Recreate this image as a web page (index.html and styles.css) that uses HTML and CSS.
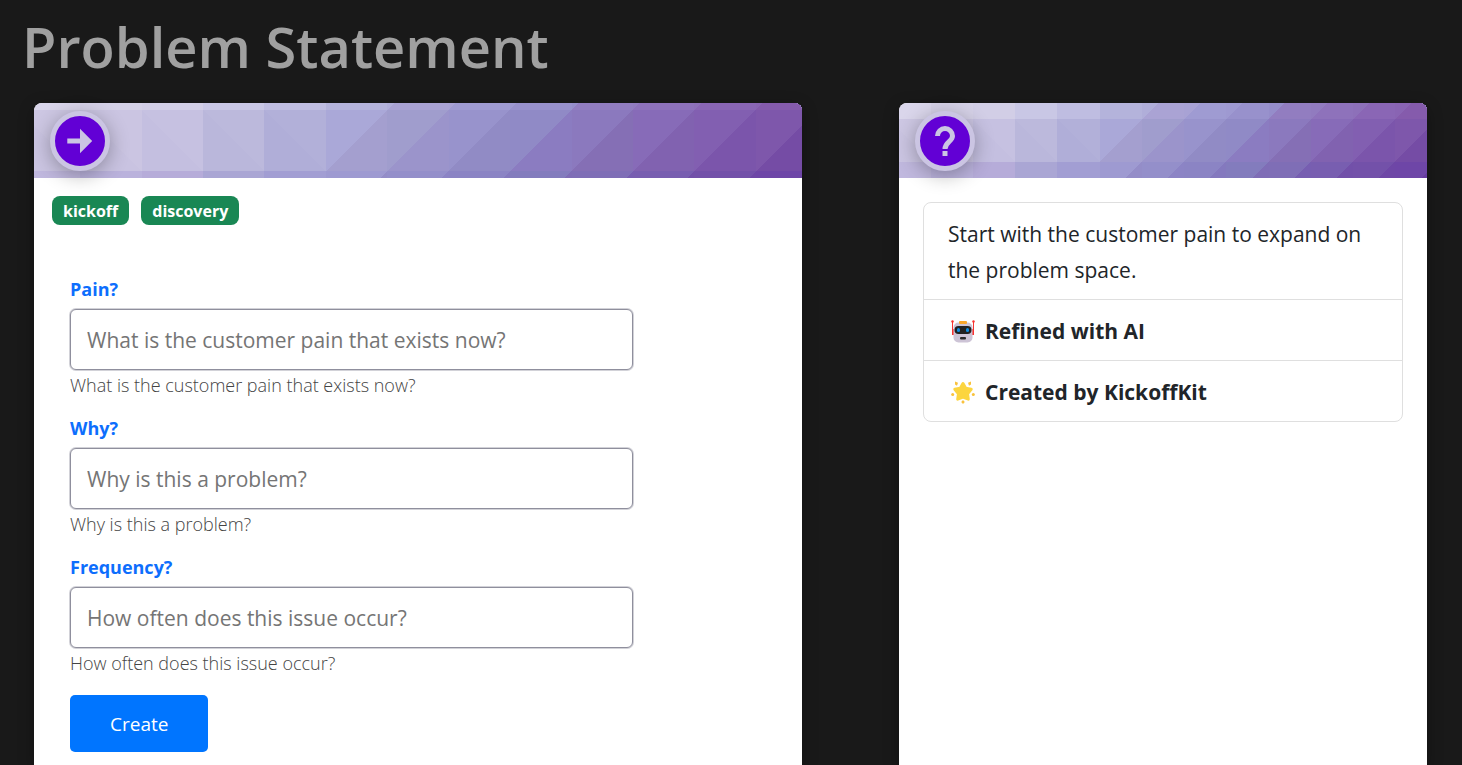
FILE: index.html
```html
<!DOCTYPE html>
<html lang="en">
<head>
  <meta charset="UTF-8">
  <title>Problem Statement</title>
  <meta name="viewport" content="width=device-width, initial-scale=1.0">
  <link rel="stylesheet" href="styles.css">
</head>
<body>
  <!-- Shared banner pattern, crisp edges so no seams show between tiles -->
  <svg class="defs" aria-hidden="true">
    <symbol id="banner" viewBox="0 0 1250 300" preserveAspectRatio="xMidYMid slice" shape-rendering="crispEdges">
      <!-- top row -->
      <path fill="#dad6eb" d="M0 0h1250v102H0z"/>
      <path fill="#d5d1e7" d="M75 0h1175v102H75z"/>
      <path fill="#d2cee6" d="M175 0h1075v102H175z"/>
      <path fill="#c9c7e5" d="M275 0h975v102H275z"/>
      <path fill="#bfbde1" d="M375 0h875v102H375z"/>
      <path fill="#b4b3db" d="M475 0h775v102H475z"/>
      <path fill="#b0aed9" d="M575 0h675v102H575z"/>
      <path fill="#aaa3d4" d="M575 100L675 0v102H575z"/>
      <path fill="#a8a2d4" d="M675 0h575v102H675z"/>
      <path fill="#9f9bd2" d="M675 100L775 0v102H675z"/>
      <path fill="#9e99d1" d="M775 0h475v102H775z"/>
      <path fill="#9891cc" d="M775 100L875 0v102H775z"/>
      <path fill="#958dca" d="M875 0h375v102H875z"/>
      <path fill="#927dc0" d="M875 100L975 0v102H875z"/>
      <path fill="#917bbf" d="M975 0h275v102H975z"/>
      <path fill="#8e72bb" d="M975 100l100-100v102H975z"/>
      <path fill="#8d70b9" d="M1075 0h175v102h-175z"/>
      <path fill="#8a66b5" d="M1075 100l100-100v102h-100z"/>
      <path fill="#8964b3" d="M1175 0h75v102h-75z"/>
      <path fill="#855bac" d="M1175 100l75-75v77h-75z"/>
      <!-- middle row -->
      <path fill="#cdc7e3" d="M0 100h1250v102H0z"/>
      <path fill="#cbc5e2" d="M0 125l75 75v2H0z"/>
      <path fill="#cbc5e2" d="M75 100h1175v102H75z"/>
      <path fill="#c9c3e1" d="M75 100l100 100v2H75z"/>
      <path fill="#c6c1e1" d="M175 100h1075v102H175z"/>
      <path fill="#c4bfe0" d="M175 100l100 100v2H175z"/>
      <path fill="#bcb9dc" d="M275 100h975v102H275z"/>
      <path fill="#bab7db" d="M275 100l100 100v2H275z"/>
      <path fill="#b2b0d9" d="M375 100h875v102H375z"/>
      <path fill="#b0aed8" d="M375 100l100 100v2H375z"/>
      <path fill="#aaa8d8" d="M475 100h775v102H475z"/>
      <path fill="#a49fcf" d="M475 200l100-100v102H475z"/>
      <path fill="#a09dcd" d="M575 100h675v102H575z"/>
      <path fill="#9b94cb" d="M575 200l100-100v102H575z"/>
      <path fill="#9893cc" d="M675 100h575v102H675z"/>
      <path fill="#918bc5" d="M675 200l100-100v102H675z"/>
      <path fill="#908ac6" d="M775 100h475v102H775z"/>
      <path fill="#8b7cc1" d="M775 200l100-100v102H775z"/>
      <path fill="#8b79be" d="M875 100h375v102H875z"/>
      <path fill="#856fb5" d="M875 200l100-100v102H875z"/>
      <path fill="#876bb8" d="M975 100h275v102H975z"/>
      <path fill="#8162b0" d="M975 200l100-100v102H975z"/>
      <path fill="#825fb1" d="M1075 100h175v102h-175z"/>
      <path fill="#7b55ab" d="M1075 200l100-100v102h-100z"/>
      <path fill="#7e57ab" d="M1175 100h75v102h-75z"/>
      <path fill="#754ca5" d="M1175 200l75-75v77h-75z"/>
      <!-- bottom row -->
      <path fill="#c0b8de" d="M0 200h1250v100H0z"/>
      <path fill="#bab2dc" d="M75 200h1175v100H75z"/>
      <path fill="#b6acd9" d="M175 200h1075v100H175z"/>
      <path fill="#aaa6d4" d="M275 200h975v100H275z"/>
      <path fill="#a29ed3" d="M375 200h875v100H375z"/>
      <path fill="#9e9ad1" d="M475 200h775v100H475z"/>
      <path fill="#948dc8" d="M475 300l100-100v100z"/>
      <path fill="#948fca" d="M575 200h675v100H575z"/>
      <path fill="#8c84c5" d="M575 300l100-100v100z"/>
      <path fill="#8b84c4" d="M675 200h575v100H675z"/>
      <path fill="#8479be" d="M675 300l100-100v100z"/>
      <path fill="#837cbd" d="M775 200h475v100H775z"/>
      <path fill="#7f6db6" d="M775 300l100-100v100z"/>
      <path fill="#7f6eb6" d="M875 200h375v100H875z"/>
      <path fill="#775eb1" d="M875 300l100-100v100z"/>
      <path fill="#785eb0" d="M975 200h275v100H975z"/>
      <path fill="#7250a9" d="M975 300l100-100v100z"/>
      <path fill="#7351a9" d="M1075 200h175v100h-175z"/>
      <path fill="#6e47a6" d="M1075 300l100-100v100z"/>
      <path fill="#6e46a7" d="M1175 200h75v100h-75z"/>
      <path fill="#673da0" d="M1175 300l75-75v75z"/>
    </symbol>
  </svg>

  <h1 class="page-title">Problem Statement</h1>

  <main class="board">
    <section class="card">
      <div class="card-header">
        <svg class="banner" aria-hidden="true"><use href="#banner"/></svg>
        <span class="card-icon">
          <svg width="50" height="50" viewBox="0 0 50 50" aria-hidden="true">
            <path fill="currentColor" d="M12.300 22.400H25v-9.600L37.200 25 25 37.200v-9.600H12.300z"/>
          </svg>
        </span>
      </div>
      <div class="tags">
        <span class="tag">kickoff</span>
        <span class="tag">discovery</span>
      </div>
      <form class="statement-form">
        <div class="field">
          <label for="pain">Pain?</label>
          <input type="text" id="pain" placeholder="What is the customer pain that exists now?" aria-describedby="pain-help">
          <small id="pain-help">What is the customer pain that exists now?</small>
        </div>
        <div class="field">
          <label for="why">Why?</label>
          <input type="text" id="why" placeholder="Why is this a problem?" aria-describedby="why-help">
          <small id="why-help">Why is this a problem?</small>
        </div>
        <div class="field">
          <label for="frequency">Frequency?</label>
          <input type="text" id="frequency" placeholder="How often does this issue occur?" aria-describedby="frequency-help">
          <small id="frequency-help">How often does this issue occur?</small>
        </div>
        <button type="submit" class="btn">Create</button>
      </form>
    </section>

    <aside class="card">
      <div class="card-header">
        <svg class="banner" aria-hidden="true"><use href="#banner"/></svg>
        <span class="card-icon">
          <svg width="50" height="50" viewBox="0 0 50 50" aria-hidden="true">
            <path fill="none" stroke="currentColor" stroke-width="5" d="M17.500 20a7.500 7.500 0 0 1 15 0c0 5.500-7.500 6-7.500 13"/>
            <path fill="currentColor" d="M22.500 35h5v5h-5z"/>
          </svg>
        </span>
      </div>
      <ul class="info-list">
        <li>Start with the customer pain to expand on the problem space.</li>
        <li class="info-strong">
          <svg class="emoji" viewBox="0 0 24 24" aria-hidden="true">
            <path fill="#f8312f" d="M1 2h1v8h1v6H1zM22 2h1v14h-2v-6h1z"/>
            <circle fill="#f8312f" cx="1.500" cy="2.500" r="1.200"/>
            <circle fill="#f8312f" cx="22.500" cy="2.500" r="1.200"/>
            <rect fill="#cdc4d6" x="2.500" y="3.500" width="19" height="20" rx="5"/>
            <rect fill="#f9a62b" x="8" y="2" width="8" height="3" rx="1"/>
            <rect fill="#212121" x="3.500" y="7" width="17" height="8" rx="4"/>
            <rect fill="#0d8ae0" x="6" y="9" width="3" height="4" rx="1.500"/>
            <rect fill="#0d8ae0" x="15" y="9" width="3" height="4" rx="1.500"/>
            <rect fill="#2b2b2b" x="9" y="18" width="6" height="2.500" rx="1"/>
          </svg>
          Refined with AI
        </li>
        <li class="info-strong">
          <svg class="emoji" viewBox="0 0 24 24" aria-hidden="true">
            <path fill="#fcd53f" stroke="#fcd53f" stroke-width="3" stroke-linejoin="round" d="M12 3.500l2.700 4.800 5.500.9-3.700 4.500.8 5.500-5.300-2-5.300 2 .8-5.500-3.700-4.500 5.500-.9z"/>
            <g fill="#f9c23c">
              <path d="M4 1.500l3 1.200-1 3-2-1.200zM20 1.500l-3 1.200 1 3 2-1.200z"/>
              <circle cx="1.700" cy="14.500" r="1.500"/>
              <circle cx="22.300" cy="14.500" r="1.500"/>
              <path d="M12 20l1.800 2-1.800 2-1.800-2z"/>
            </g>
          </svg>
          Created by KickoffKit
        </li>
      </ul>
    </aside>
  </main>
</body>
</html>
```

FILE: styles.css
```css
* { box-sizing: border-box; }
body {
  margin: 0;
  min-height: 100vh;
  display: flex;
  flex-direction: column;
  background: #191919;
  font-family: "Segoe UI", "Open Sans", "Noto Sans", sans-serif;
  font-size: 21px;
  line-height: 36px;
  color: #212529;
}
.defs { position: absolute; width: 0; height: 0; }
.page-title {
  margin: 0;
  padding: 11px 22px 22px;
  font-size: 56px;
  font-weight: 600;
  line-height: 70px;
  color: #a0a0a0;
}
.board {
  flex: 1;
  display: grid;
  grid-template-columns: 16fr 11fr;
  gap: 97px;
  padding: 0 35px 0 34px;
}
.card {
  background: #fff;
  border-radius: 8px 8px 0 0;
  box-shadow: 0 4px 16px rgba(0, 0, 0, .3);
}
.card-header {
  position: relative;
  height: 75px;
  padding: 8px 16px;
}
.banner {
  position: absolute;
  top: 0;
  left: 0;
  width: 100%;
  height: 100%;
  border-radius: 8px 8px 0 0;
}
.card-icon {
  position: relative;
  display: block;
  width: 60px;
  height: 60px;
  border: 5px solid #cbc5e3;
  border-radius: 50%;
  background: #6200d5;
  color: #cbc5e3;
  box-shadow: 0 4px 20px rgba(0, 0, 0, .3);
}
.card-icon svg { display: block; }

/* tags */
.tags {
  display: flex;
  gap: 12px;
  padding: 18px 18px 0;
}
.tag {
  padding: 1px 11px 0;
  border-radius: 8px;
  background: #198754;
  color: #fff;
  font-size: 16px;
  font-weight: 700;
  line-height: 28px;
}

/* form */
.statement-form {
  max-width: 635px;
  padding: 49px 36px 0;
}
.field {
  display: flex;
  flex-direction: column;
  margin-bottom: 13px;
}
.field label {
  margin-bottom: 5px;
  font-size: 18px;
  font-weight: 700;
  line-height: 30px;
  color: #0d6efd;
}
.field input {
  height: 61px;
  padding: 0 16px;
  border: 1px solid #8f8f9d;
  border-radius: 6px;
  box-shadow: 0 0 0 1px #d2d2d8;
  font: inherit;
}
.field input::placeholder { color: #757575; }
.field small {
  font-size: 18px;
  font-weight: 300;
  line-height: 30px;
  color: #444;
}
.btn {
  margin-top: 4px;
  padding: 0 40px;
  height: 57px;
  border: 0;
  border-radius: 5px;
  background: #0075ff;
  color: #fff;
  font: inherit;
  font-size: 19px;
}

/* info panel */
.info-list {
  margin: 24px;
  padding: 0;
  list-style: none;
  border: 1px solid #dfdfdf;
  border-radius: 8px;
}
.info-list li { padding: 13px 24px 11px; }
.info-list li + li { border-top: 1px solid #dfdfdf; }
.info-strong {
  display: flex;
  align-items: center;
  gap: 10px;
  font-weight: 700;
}
.emoji {
  width: 24px;
  height: 24px;
  margin-left: 3px;
}
```
